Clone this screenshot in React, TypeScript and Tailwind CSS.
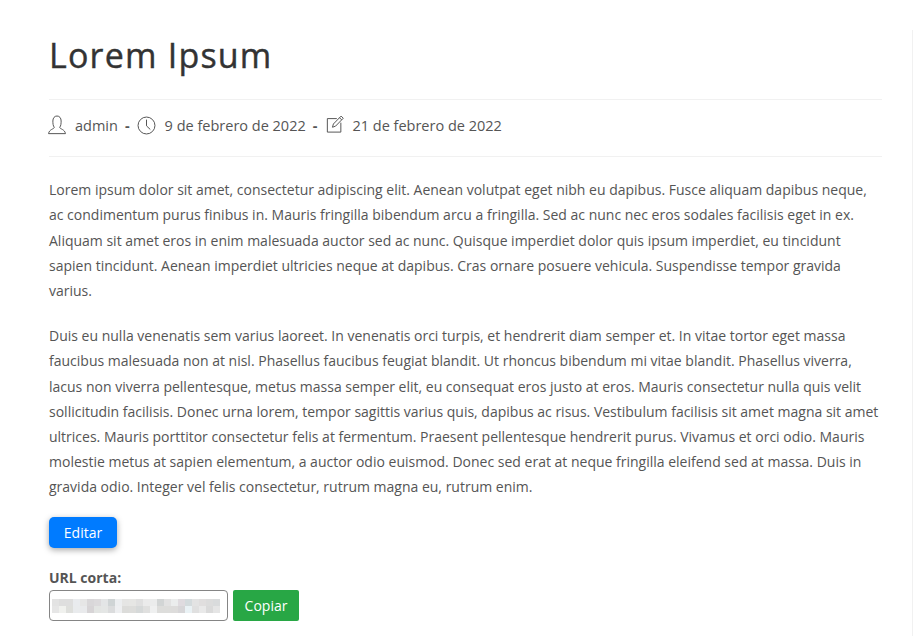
const paragraphs = [
  'Lorem ipsum dolor sit amet, consectetur adipiscing elit. Aenean volutpat eget nibh eu dapibus. Fusce aliquam dapibus neque, ac condimentum purus finibus in. Mauris fringilla bibendum arcu a fringilla. Sed ac nunc nec eros sodales facilisis eget in ex. Aliquam sit amet eros in enim malesuada auctor sed ac nunc. Quisque imperdiet dolor quis ipsum imperdiet, eu tincidunt sapien tincidunt. Aenean imperdiet ultricies neque at dapibus. Cras ornare posuere vehicula. Suspendisse tempor gravida varius.',
  'Duis eu nulla venenatis sem varius laoreet. In venenatis orci turpis, et hendrerit diam semper et. In vitae tortor eget massa faucibus malesuada non at nisl. Phasellus faucibus feugiat blandit. Ut rhoncus bibendum mi vitae blandit. Phasellus viverra, lacus non viverra pellentesque, metus massa semper elit, eu consequat eros justo at eros. Mauris consectetur nulla quis velit sollicitudin facilisis. Donec urna lorem, tempor sagittis varius quis, dapibus ac risus. Vestibulum facilisis sit amet magna sit amet ultrices. Mauris porttitor consectetur felis at fermentum. Praesent pellentesque hendrerit purus. Vivamus et orci odio. Mauris molestie metus at sapien elementum, a auctor odio euismod. Donec sed erat at neque fringilla eleifend sed at massa. Duis in gravida odio. Integer vel felis consectetur, rutrum magna eu, rutrum enim.',
]

// pixelated (censored) url
const blurCells = [
  'bg-[#e3e3e3]', 'bg-[#dedede]', 'bg-[#dedede]', 'bg-[#e9ebee]', 'bg-[#e6e6e6]', 'bg-[#d9d7d9]', 'bg-[#dcdadc]', 'bg-[#e3e5e6]',
  'bg-[#cfd4d5]', 'bg-[#eceef0]', 'bg-[#e5e5e4]', 'bg-[#e6e6e4]', 'bg-[#e0e0e0]', 'bg-[#ebebeb]', 'bg-[#ebecec]', 'bg-[#d2d5d5]',
  'bg-[#e2e2e2]', 'bg-[#ebeded]', 'bg-[#dfdbdf]', 'bg-[#d4dbdd]', 'bg-[#e3e3e3]', 'bg-[#e0dede]', 'bg-[#dcdcdc]', 'bg-[#d9dbdc]',
  'bg-[#e6e6e6]', 'bg-[#f0f1ee]', 'bg-[#dedfdc]', 'bg-[#e9ebed]', 'bg-[#e9eaec]', 'bg-[#d7d4d6]', 'bg-[#e3e5e3]', 'bg-[#e4e6e5]',
  'bg-[#dbdcdd]', 'bg-[#eeeff1]', 'bg-[#dcdcda]', 'bg-[#dddddb]', 'bg-[#d6d9d9]', 'bg-[#e0e0df]', 'bg-[#eff0f0]', 'bg-[#dddddb]',
  'bg-[#dddddb]', 'bg-[#dddcdb]', 'bg-[#d7d6d8]', 'bg-[#eaf2f5]', 'bg-[#e0e0e0]', 'bg-[#e9e9e9]', 'bg-[#dadada]', 'bg-[#e5e5e5]',
]

const UserIcon = () => (
  <svg width="18" height="20" viewBox="0 0 20 22" fill="none" stroke="currentColor" strokeWidth="1.1" className="-ml-[1.5px] -mt-[2px] shrink-0">
    <path d="M7 13.6C5.6 12 5.4 9 5.4 6.6C5.4 3.2 7.3 1 10 1C12.7 1 14.6 3.2 14.6 6.6C14.6 9 14.4 12 13 13.6C13 15.4 18.8 15.8 19.4 20.6L0.6 20.6C1.2 15.8 7 15.4 7 13.6Z" />
  </svg>
)

const ClockIcon = () => (
  <svg width="19" height="19" viewBox="0 0 20 20" fill="none" stroke="currentColor" strokeWidth="1.05" className="-mt-[2px] shrink-0">
    <circle cx="10" cy="10" r="8.9" />
    <path d="M10 3.8V10.4L14 14.2" />
  </svg>
)

const NoteIcon = () => (
  <svg width="18" height="18" viewBox="0 0 20 20" fill="none" stroke="currentColor" strokeWidth="1.1" className="-mt-[4px] ml-[1.5px] shrink-0">
    <path d="M12 4H1.5V19H16.5V8.5" />
    <path d="M7.2 13.6L8.2 10L16.8 1.2L19.2 3.6L10.6 12.4Z" />
    <path d="M15 3L17.4 5.4" />
  </svg>
)

const App = () => {
  return (
    <div className="h-[636px] overflow-hidden bg-white font-['Open_Sans',sans-serif] text-[#333]">
      <div className="flex h-full">
        <div className="w-[912px] pt-[30px] pl-[49px] pr-[30px]">
          <h1 className="text-[34px] leading-[50px] font-normal tracking-[1.2px] text-[#333] [-webkit-text-stroke:0.4px_#333]">Lorem Ipsum</h1>

          {/* meta */}
          <div className="mt-[19px] flex h-[58px] items-center border-y border-[#f1f1f1] pb-[4px] text-[14.5px] text-[#555]">
            <UserIcon />
            <span className="ml-[9.5px]">admin</span>
            <span className="mx-[7px] font-bold">-</span>
            <ClockIcon />
            <span className="ml-[9px]">9 de febrero de 2022</span>
            <span className="mx-[7px] font-bold">-</span>
            <NoteIcon />
            <span className="ml-[8.5px]">21 de febrero de 2022</span>
          </div>

          <div className="mt-[20.2px] flex flex-col gap-[20px] text-sm leading-[25.2px] text-[#555]">
            {paragraphs.map(p => (
              <p key={p.slice(0, 10)}>{p}</p>
            ))}
          </div>

          <button className="mt-[17.8px] block h-[31px] w-[68px] rounded-[5px] bg-[#007bff] text-sm text-white shadow-[0_2px_6px_rgba(0,0,0,0.35)]">
            Editar
          </button>

          <div className="mt-[20px] text-sm leading-[20px] font-bold text-[#555]">URL corta:</div>
          <div className="mt-[2px] flex gap-[5px]">
            <div className="flex h-[31px] w-[179px] items-center rounded-[4px] border border-[#858585] px-[2px]">
              <div className="grid grid-cols-[repeat(24,7px)] grid-rows-[7px_7px]">
                {blurCells.map((c, i) => (
                  <div key={i} className={c} />
                ))}
              </div>
            </div>
            <button className="h-[31px] w-[66px] rounded-[2px] bg-[#28a745] text-sm text-white">Copiar</button>
          </div>
        </div>
        <div className="mt-[30px] w-px bg-[#f1f1f1]" />
      </div>
    </div>
  )
}

export default App
